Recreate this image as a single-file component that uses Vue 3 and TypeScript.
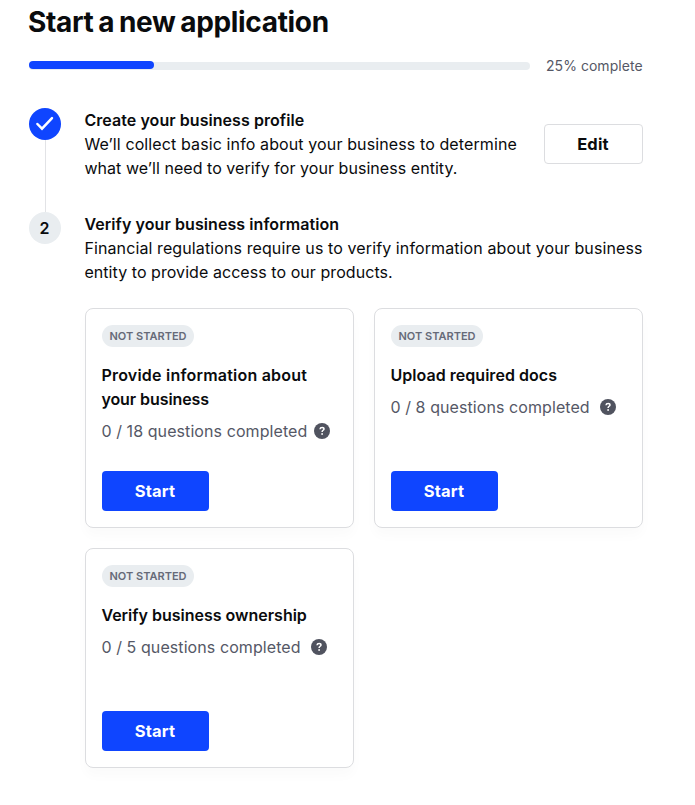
<script setup lang="ts">
interface Task {
  id: string
  lines: string[]
  total: number
  wide: boolean
}

const percent = 25

const tasks: Task[] = [
  { id: 'info', lines: ['Provide information about', 'your business'], total: 18, wide: false },
  { id: 'docs', lines: ['Upload required docs'], total: 8, wide: true },
  { id: 'owner', lines: ['Verify business ownership'], total: 5, wide: true },
]
</script>

<template>
  <main class="page">
    <h1 class="title">Start a new application</h1>

    <div class="progress">
      <div class="track">
        <div class="fill" :style="{ width: percent + '%' }"></div>
      </div>
      <span class="percent">{{ percent }}% complete</span>
    </div>

    <section class="step">
      <div class="rail">
        <span class="marker done">
          <svg width="32" height="32" viewBox="0 0 32 32" fill="none">
            <path d="M8.4 16 13 20.7 23 10.2" stroke="#fff" stroke-width="2.5" stroke-linecap="round" />
          </svg>
        </span>
        <span class="line"></span>
      </div>
      <div class="body profile">
        <div class="copy">
          <h2 class="heading create">Create your business profile</h2>
          <p class="text collect">We’ll collect basic info about your business to determine</p>
          <p class="text need">what we’ll need to verify for your business entity.</p>
        </div>
        <button class="btn edit" type="button">Edit</button>
      </div>
    </section>

    <section class="step">
      <div class="rail">
        <span class="marker number">2</span>
      </div>
      <div class="body">
        <h2 class="heading verify">Verify your business information</h2>
        <p class="text regs">Financial regulations require us to verify information about your business</p>
        <p class="text entity">entity to provide access to our products.</p>
        <div class="cards">
          <article v-for="task in tasks" :key="task.id" class="card">
            <span class="badge">NOT STARTED</span>
            <h3 class="card-title" :class="task.id">
              <span v-for="line in task.lines" :key="line" class="title-line">{{ line }}</span>
            </h3>
            <div class="count" :class="{ wide: task.wide }">
              <span>0 / {{ task.total }} questions completed</span>
              <svg class="help" width="16" height="16" viewBox="0 0 16 16" fill="none">
                <circle cx="8" cy="8" r="8" fill="#50535f" />
                <path d="M6 6.2C6.1 5 6.9 4.4 8.1 4.4c1.1 0 1.9.6 1.9 1.5 0 1.4-1.9 1.3-1.9 3" stroke="#fff" stroke-width="1.5" />
                <circle cx="8.1" cy="11" r="0.9" fill="#fff" />
              </svg>
            </div>
            <button class="btn start" type="button">Start</button>
          </article>
        </div>
      </div>
    </section>
  </main>
</template>

<style>
body {
  margin: 0;
  background: #fff;
}
</style>

<style scoped>
.page {
  box-sizing: border-box;
  width: 695px;
  height: 805px;
  padding: 4px 52px 0 29px;
  font-family: Inter, 'Liberation Sans', sans-serif;
  color: #0a0b0d;
  overflow: hidden;
}
h1, h2, h3, p {
  margin: 0;
  white-space: nowrap;
}
.title {
  margin-left: -1px;
  font-size: 28px;
  line-height: 36px;
  font-weight: 700;
  letter-spacing: -0.34px;
  word-spacing: -1.5px;
}
.progress {
  display: flex;
  align-items: center;
  gap: 16px;
  height: 20px;
  margin-top: 16px;
}
.track {
  flex: 1;
  height: 8px;
  border-radius: 4px;
  background: #e9edf0;
}
.fill {
  height: 8px;
  margin-top: -1px;
  border-radius: 4px;
  background: #0f45ff;
}
.percent {
  width: 97px;
  font-size: 14px;
  line-height: 20px;
  letter-spacing: 0.04px;
  color: #555866;
  white-space: nowrap;
}
.progress + .step {
  margin-top: 32px;
}
.step {
  display: flex;
  gap: 24px;
}
.rail {
  display: flex;
  flex-direction: column;
  align-items: center;
  width: 32px;
}
.marker {
  box-sizing: border-box;
  display: flex;
  align-items: center;
  justify-content: center;
  width: 32px;
  height: 32px;
  border-radius: 50%;
  background: #e9edf0;
  font-size: 16px;
  font-weight: 600;
}
.number {
  padding-right: 1px;
}
.done {
  background: #0f45ff;
}
.line {
  width: 1px;
  height: 72px;
  margin-left: 1px;
  background: #e2e3e6;
}
.body {
  flex: 1;
  min-width: 0;
}
.profile {
  display: flex;
  justify-content: space-between;
}
.copy {
  width: 440px;
}
.heading,
.text,
.card-title,
.count {
  margin-left: -0.6px;
}
.heading,
.card-title {
  font-size: 16px;
  line-height: 24px;
  font-weight: 600;
}
.text {
  font-size: 16px;
  line-height: 24px;
}
.create {
  letter-spacing: 0.06px;
}
.collect {
  letter-spacing: 0.115px;
}
.need {
  letter-spacing: 0.05px;
}
.verify {
  letter-spacing: 0.08px;
}
.regs {
  letter-spacing: 0.107px;
}
.entity {
  letter-spacing: 0.06px;
}
.btn {
  box-sizing: border-box;
  height: 40px;
  padding: 0 1px 0 0;
  border-radius: 4px;
  font: 700 16.5px/24px Inter, 'Liberation Sans', sans-serif;
  letter-spacing: 0.2px;
}
.edit {
  width: 99px;
  margin-top: 16px;
  border: 1px solid #dcdde0;
  background: #fff;
  color: #0a0b0d;
}
.start {
  width: 107px;
  margin-top: auto;
  border: 0;
  background: #0f45ff;
  color: #fff;
}
.cards {
  display: grid;
  grid-template-columns: repeat(2, 269px);
  gap: 20px;
  margin-top: 24px;
}
.card {
  box-sizing: border-box;
  display: flex;
  flex-direction: column;
  align-items: flex-start;
  height: 220px;
  padding: 16px;
  border: 1px solid #dcdde0;
  border-radius: 8px;
  background: #fff;
  box-shadow: 0 8px 12px rgba(0, 0, 0, 0.02);
}
.badge {
  width: 92px;
  height: 22px;
  border-radius: 11px;
  background: #e9edf0;
  color: #666a78;
  font-size: 11px;
  line-height: 22px;
  font-weight: 600;
  text-align: center;
  white-space: nowrap;
}
.card-title {
  margin-top: 16px;
}
.title-line {
  display: block;
}
.info .title-line:first-child {
  letter-spacing: 0.22px;
}
.info .title-line:last-child {
  letter-spacing: -0.08px;
}
.docs {
  letter-spacing: 0.04px;
}
.count {
  display: flex;
  align-items: center;
  gap: 7px;
  margin-top: 8px;
  font-size: 16px;
  line-height: 24px;
  letter-spacing: 0.08px;
  color: #555866;
  white-space: nowrap;
}
.wide {
  gap: 10px;
}
</style>
